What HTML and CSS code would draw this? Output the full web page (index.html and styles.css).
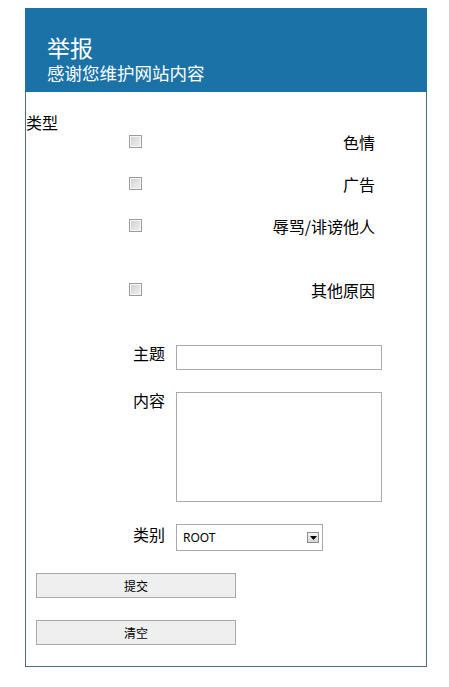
FILE: index.html
```html
<!DOCTYPE html>
<html lang="zh-CN">
<head>
<meta charset="utf-8">
<title>举报</title>
<link rel="stylesheet" href="styles.css">
</head>
<body>
<div class="panel">
  <div class="head">
    <div class="title">举报</div>
    <div class="sub">感谢您维护网站内容</div>
  </div>
  <div class="content">
    <div class="type-label">类型</div>
    <div class="opts">
      <label class="opt"><input type="checkbox" class="cb"><span class="opt-text">色情</span></label>
      <label class="opt"><input type="checkbox" class="cb"><span class="opt-text">广告</span></label>
      <label class="opt"><input type="checkbox" class="cb"><span class="opt-text">辱骂/诽谤他人</span></label>
      <label class="opt opt-last"><input type="checkbox" class="cb"><span class="opt-text">其他原因</span></label>
    </div>
    <div class="form">
      <div class="row row-subject"><span class="lbl">主题</span><input type="text" class="field"></div>
      <div class="row row-body"><span class="lbl">内容</span><textarea class="area"></textarea></div>
      <div class="row"><span class="lbl">类别</span>
        <div class="select"><span class="select-text">ROOT</span><span class="select-btn"><svg width="7" height="4" viewBox="0 0 7 4"><path d="M0 0H7L3.5 4Z" fill="#000"/></svg></span></div>
      </div>
    </div>
    <div class="actions">
      <button type="button" class="btn">提交</button>
      <button type="button" class="btn">清空</button>
    </div>
  </div>
</div>
</body>
</html>
```

FILE: styles.css
```css
body {
  margin: 8px;
  font-family: "Noto Sans CJK SC", "Noto Sans", sans-serif;
  color: #000;
  background: #fff;
}

.panel {
  margin-left: 17px;
  width: 400px;
  border: 1px solid #4b6d82;
  border-top: none;
}

.head {
  height: 84px;
  box-sizing: border-box;
  margin: 0 -1px;
  padding: 25px 0 0 22px;
  background: #1b72a7;
  color: #fff;
}

.title {
  font-size: 23px;
  line-height: 28px;
}

.sub {
  font-size: 17.5px;
  line-height: 24px;
}

.content {
  padding: 20px 0 21px 0;
}

.type-label {
  font-size: 16px;
  line-height: 20px;
}

.opt {
  display: flex;
  align-items: flex-start;
  height: 42px;
  padding: 0 51px 0 103px;
  font-size: 16px;
  line-height: 20px;
}

.opt-last {
  height: 20px;
  margin-top: 22px;
}

.cb {
  appearance: none;
  -webkit-appearance: none;
  width: 13px;
  height: 13px;
  margin: 3px 0 0 0;
  box-sizing: border-box;
  border: 1px solid #9c9c9c;
  box-shadow: inset 0 0 0 1px #f6f6f6;
  background: linear-gradient(135deg, #cfcfcf, #f2f2f2);
}

.opt-text {
  margin-left: auto;
}

.form {
  margin-top: 43px;
}

.row {
  display: flex;
  align-items: flex-start;
}

.row-subject {
  margin-bottom: 20px;
}

.row-body {
  margin-bottom: 22px;
}

.lbl {
  width: 139px;
  margin-right: 11px;
  text-align: right;
  font-size: 16px;
  line-height: 20px;
}

.field {
  width: 206px;
  height: 25px;
  margin: 2px 0 0 0;
  box-sizing: border-box;
  border: 1px solid #a9a9a9;
  padding: 0;
}

.area {
  width: 206px;
  height: 110px;
  margin: 2px 0 0 0;
  box-sizing: border-box;
  border: 1px solid #a9a9a9;
  padding: 0;
  resize: none;
}

.select {
  display: flex;
  align-items: center;
  justify-content: space-between;
  width: 147px;
  height: 27px;
  box-sizing: border-box;
  border: 1px solid #a9a9a9;
  padding: 0 3px 0 6px;
}

.select-text {
  font-family: "Noto Sans", sans-serif;
  font-size: 12px;
}

.select-btn {
  display: flex;
  align-items: center;
  justify-content: center;
  width: 12px;
  height: 11px;
  box-sizing: border-box;
  border: 1px solid #8c8c8c;
  background: linear-gradient(#f4f4f4, #d6d6d6);
}

.actions {
  margin-top: 22px;
}

.btn {
  display: block;
  width: 200px;
  height: 25px;
  margin: 0 0 22px 10px;
  box-sizing: border-box;
  border: 1px solid #a9a9a9;
  background: #efefef;
  font-family: "Noto Sans CJK SC", sans-serif;
  font-size: 12px;
  color: #000;
  padding: 0;
}

.btn:last-child {
  margin-bottom: 0;
}
```
